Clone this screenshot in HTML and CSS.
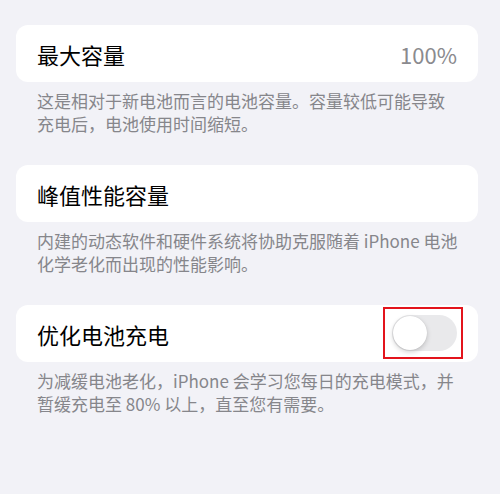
FILE: index.html
```html
<!DOCTYPE html>
<html>
<head>
    <title>电池健康</title>
    <link rel="stylesheet" href="styles.css">
</head>
<body>

<div class="page">

    <!-- 最大容量 -->
    <div class="card">
        <span class="label">最大容量</span>
        <span class="value">100%</span>
    </div>
    <p class="note">这是相对于新电池而言的电池容量。容量较低可能导致<br>充电后，电池使用时间缩短。</p>

    <!-- 峰值性能 -->
    <div class="card">
        <span class="label">峰值性能容量</span>
    </div>
    <p class="note">内建的动态软件和硬件系统将协助克服随着 iPhone 电池<br>化学老化而出现的性能影响。</p>

    <!-- 优化充电 -->
    <div class="card card-toggle">
        <span class="label">优化电池充电</span>
        <div class="mark">
            <div class="switch"><div class="knob"></div></div>
        </div>
    </div>
    <p class="note">为减缓电池老化，iPhone 会学习您每日的充电模式，并<br>暂缓充电至 80% 以上，直至您有需要。</p>

</div>

</body>
</html>
```

FILE: styles.css
```css
body {
    font-family: "Noto Sans CJK SC", "Noto Sans", sans-serif;
    background: #f2f2f7;
    margin: 0;
}

.page {
    padding: 25px 22px 0 16px;
}

.card {
    display: flex;
    align-items: center;
    justify-content: space-between;
    height: 57px;
    padding: 0 21px;
    background: white;
    border-radius: 12px;
}

.label {
    font-size: 22px;
    color: #000;
}

.value {
    font-size: 22px;
    color: #8a8a8e;
}

.note {
    margin: 7px 0 30px 21px;
    font-size: 17px;
    line-height: 23px;
    color: #86868b;
    white-space: nowrap;
}

.card-toggle {
    padding-right: 15px;
}

.mark {
    border: 2px solid #e3141c;
    padding: 6px 4px 6px 7px;
    margin-top: -2px;
}

.switch {
    width: 65px;
    height: 36px;
    border-radius: 18px;
    background: #e9e9eb;
    padding: 1px;
    box-sizing: border-box;
}

.knob {
    width: 34px;
    height: 34px;
    border-radius: 50%;
    background: white;
    box-shadow: 0 2px 5px rgba(0, 0, 0, 0.18), 0 0 1px rgba(0, 0, 0, 0.15);
}
```
